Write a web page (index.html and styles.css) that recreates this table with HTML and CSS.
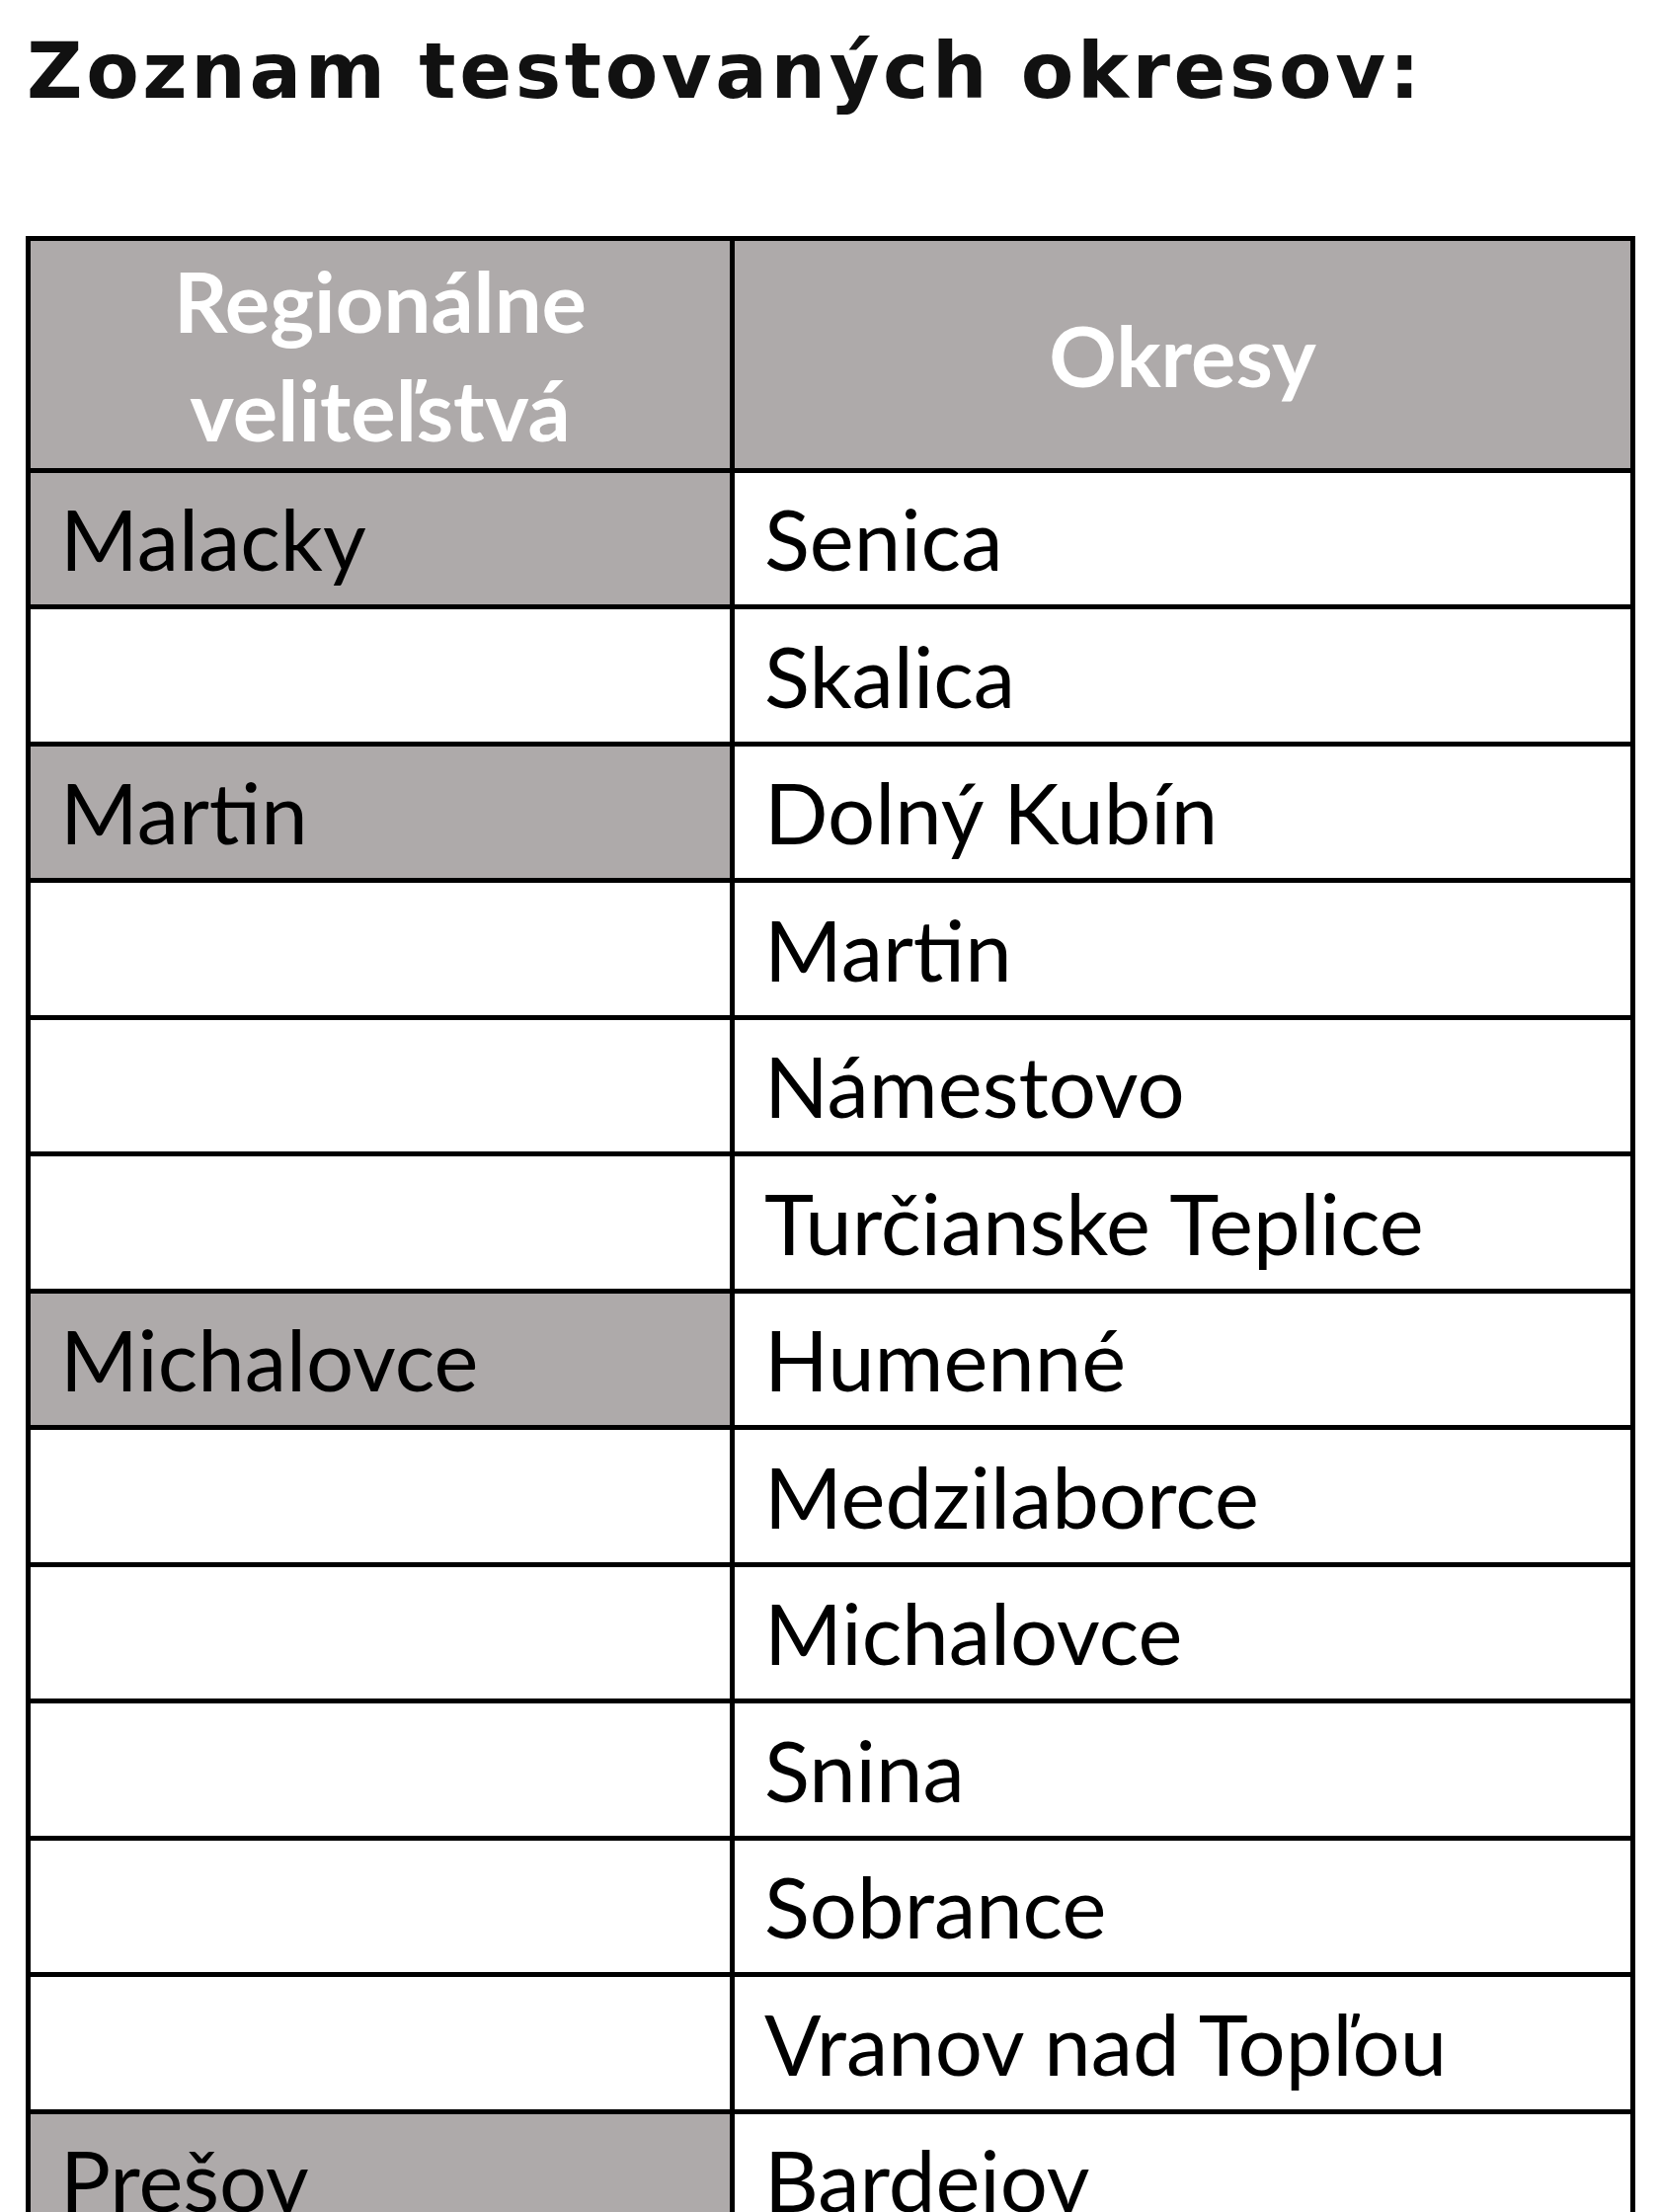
FILE: index.html
```html
<!DOCTYPE html>
<html lang="sk">
<head>
<meta charset="utf-8">
<title>Zoznam testovaných okresov</title>
<link rel="stylesheet" href="styles.css">
</head>
<body>
<h1 class="title">Zoznam testovaných okresov:</h1>
<table class="districts">
  <colgroup>
    <col class="col-region">
    <col class="col-district">
  </colgroup>
  <thead>
    <tr class="head-row">
      <th>Regionálne<br>veliteľstvá</th>
      <th>Okresy</th>
    </tr>
  </thead>
  <tbody>
    <tr><td class="region">Malacky</td><td>Senica</td></tr>
    <tr><td></td><td>Skalica</td></tr>
    <tr><td class="region">Martin</td><td>Dolný Kubín</td></tr>
    <tr><td></td><td>Martin</td></tr>
    <tr><td></td><td>Námestovo</td></tr>
    <tr><td></td><td>Turčianske Teplice</td></tr>
    <tr><td class="region">Michalovce</td><td>Humenné</td></tr>
    <tr><td></td><td>Medzilaborce</td></tr>
    <tr><td></td><td>Michalovce</td></tr>
    <tr><td></td><td>Snina</td></tr>
    <tr><td></td><td>Sobrance</td></tr>
    <tr><td></td><td>Vranov nad Topľou</td></tr>
    <tr><td class="region">Prešov</td><td>Bardejov</td></tr>
  </tbody>
</table>
</body>
</html>
```
FILE: styles.css
```css
html, body {
  margin: 0;
  padding: 0;
  background: #ffffff;
}

body {
  padding: 26px 0 0 26px;
}

.title {
  margin: 0 0 119px 0;
  padding-left: 1px;
  font-family: "DejaVu Sans", Verdana, sans-serif;
  font-weight: bold;
  font-size: 78px;
  letter-spacing: 3.6px;
  line-height: 1.2;
  color: #111111;
}

.districts {
  border-collapse: collapse;
  width: 1630px;
  font-family: Lato, "Liberation Sans", sans-serif;
  font-size: 85px;
  color: #000000;
}

.col-region {
  width: 713px;
}

.districts th,
.districts td {
  border: 5px solid #000000;
  padding: 0 30px;
  vertical-align: middle;
  text-align: left;
  line-height: 1.3;
}

.head-row {
  height: 235px;
}

.districts th {
  background: #aeaaaa;
  color: #ffffff;
  font-weight: bold;
  text-align: center;
  line-height: 110px;
}

.districts tbody tr {
  height: 138.5px;
}

.districts td.region {
  background: #aeaaaa;
}
```
